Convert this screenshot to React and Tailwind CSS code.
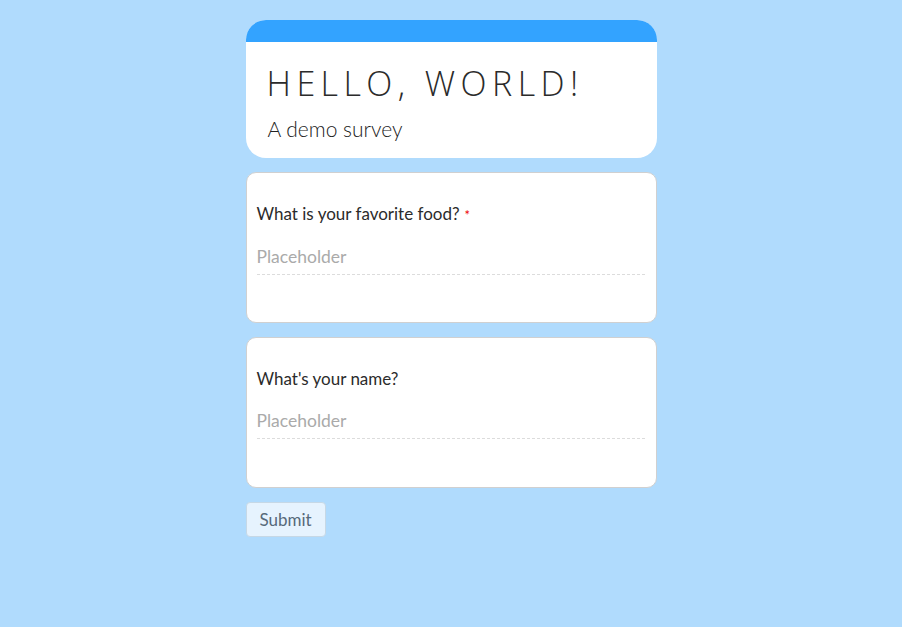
export default function App() {
  const questions = [
    { label: "What is your favorite food?", required: true },
    { label: "What's your name?", required: false },
  ];

  return (
    <div className="min-h-screen w-full bg-[#b0dbfd] font-['Lato',sans-serif]">
      <div className="mx-auto w-[411px] pt-5 pb-10">
        {/* header */}
        <div className="overflow-hidden rounded-[20px] bg-white">
          <div className="h-[22px] bg-[#33a3ff]" />
          <div className="px-[21px] pt-[19px] pb-[16px]">
            <h1 className="font-['Open_Sans',sans-serif] text-[34px] font-light leading-[44px] tracking-[0.16em] text-[#2b2b2b]">
              HELLO, WORLD!
            </h1>
            <p className="mt-[10px] pl-[1px] text-[21px] font-light leading-[27px] text-[#222]">
              A demo survey
            </p>
          </div>
        </div>

        {questions.map((q) => (
          <div
            key={q.label}
            className="mt-[14px] h-[151px] rounded-[10px] border border-[#d0d0d0] bg-white px-[10px] pt-[29px]"
          >
            <label className="block text-[17px] leading-[24px] text-[#2b2b2b]">
              {q.label}
              {q.required && <span className="ml-[5px] text-[13px] text-[#e00]">*</span>}
            </label>
            <input
              type="text"
              placeholder="Placeholder"
              className="mt-[17px] block h-[31px] w-[388px] border-0 border-b border-dashed border-[#dcdcdc] pb-[5px] text-[17.5px] text-[#333] outline-none placeholder:text-[#aaa]"
            />
          </div>
        ))}

        <button className="mt-[14px] h-[35px] rounded-[4px] border border-[#c6d8e6] bg-[#e6f3fe] px-[13px] text-[17px] text-[#56697a]">
          Submit
        </button>
      </div>
    </div>
  );
}
